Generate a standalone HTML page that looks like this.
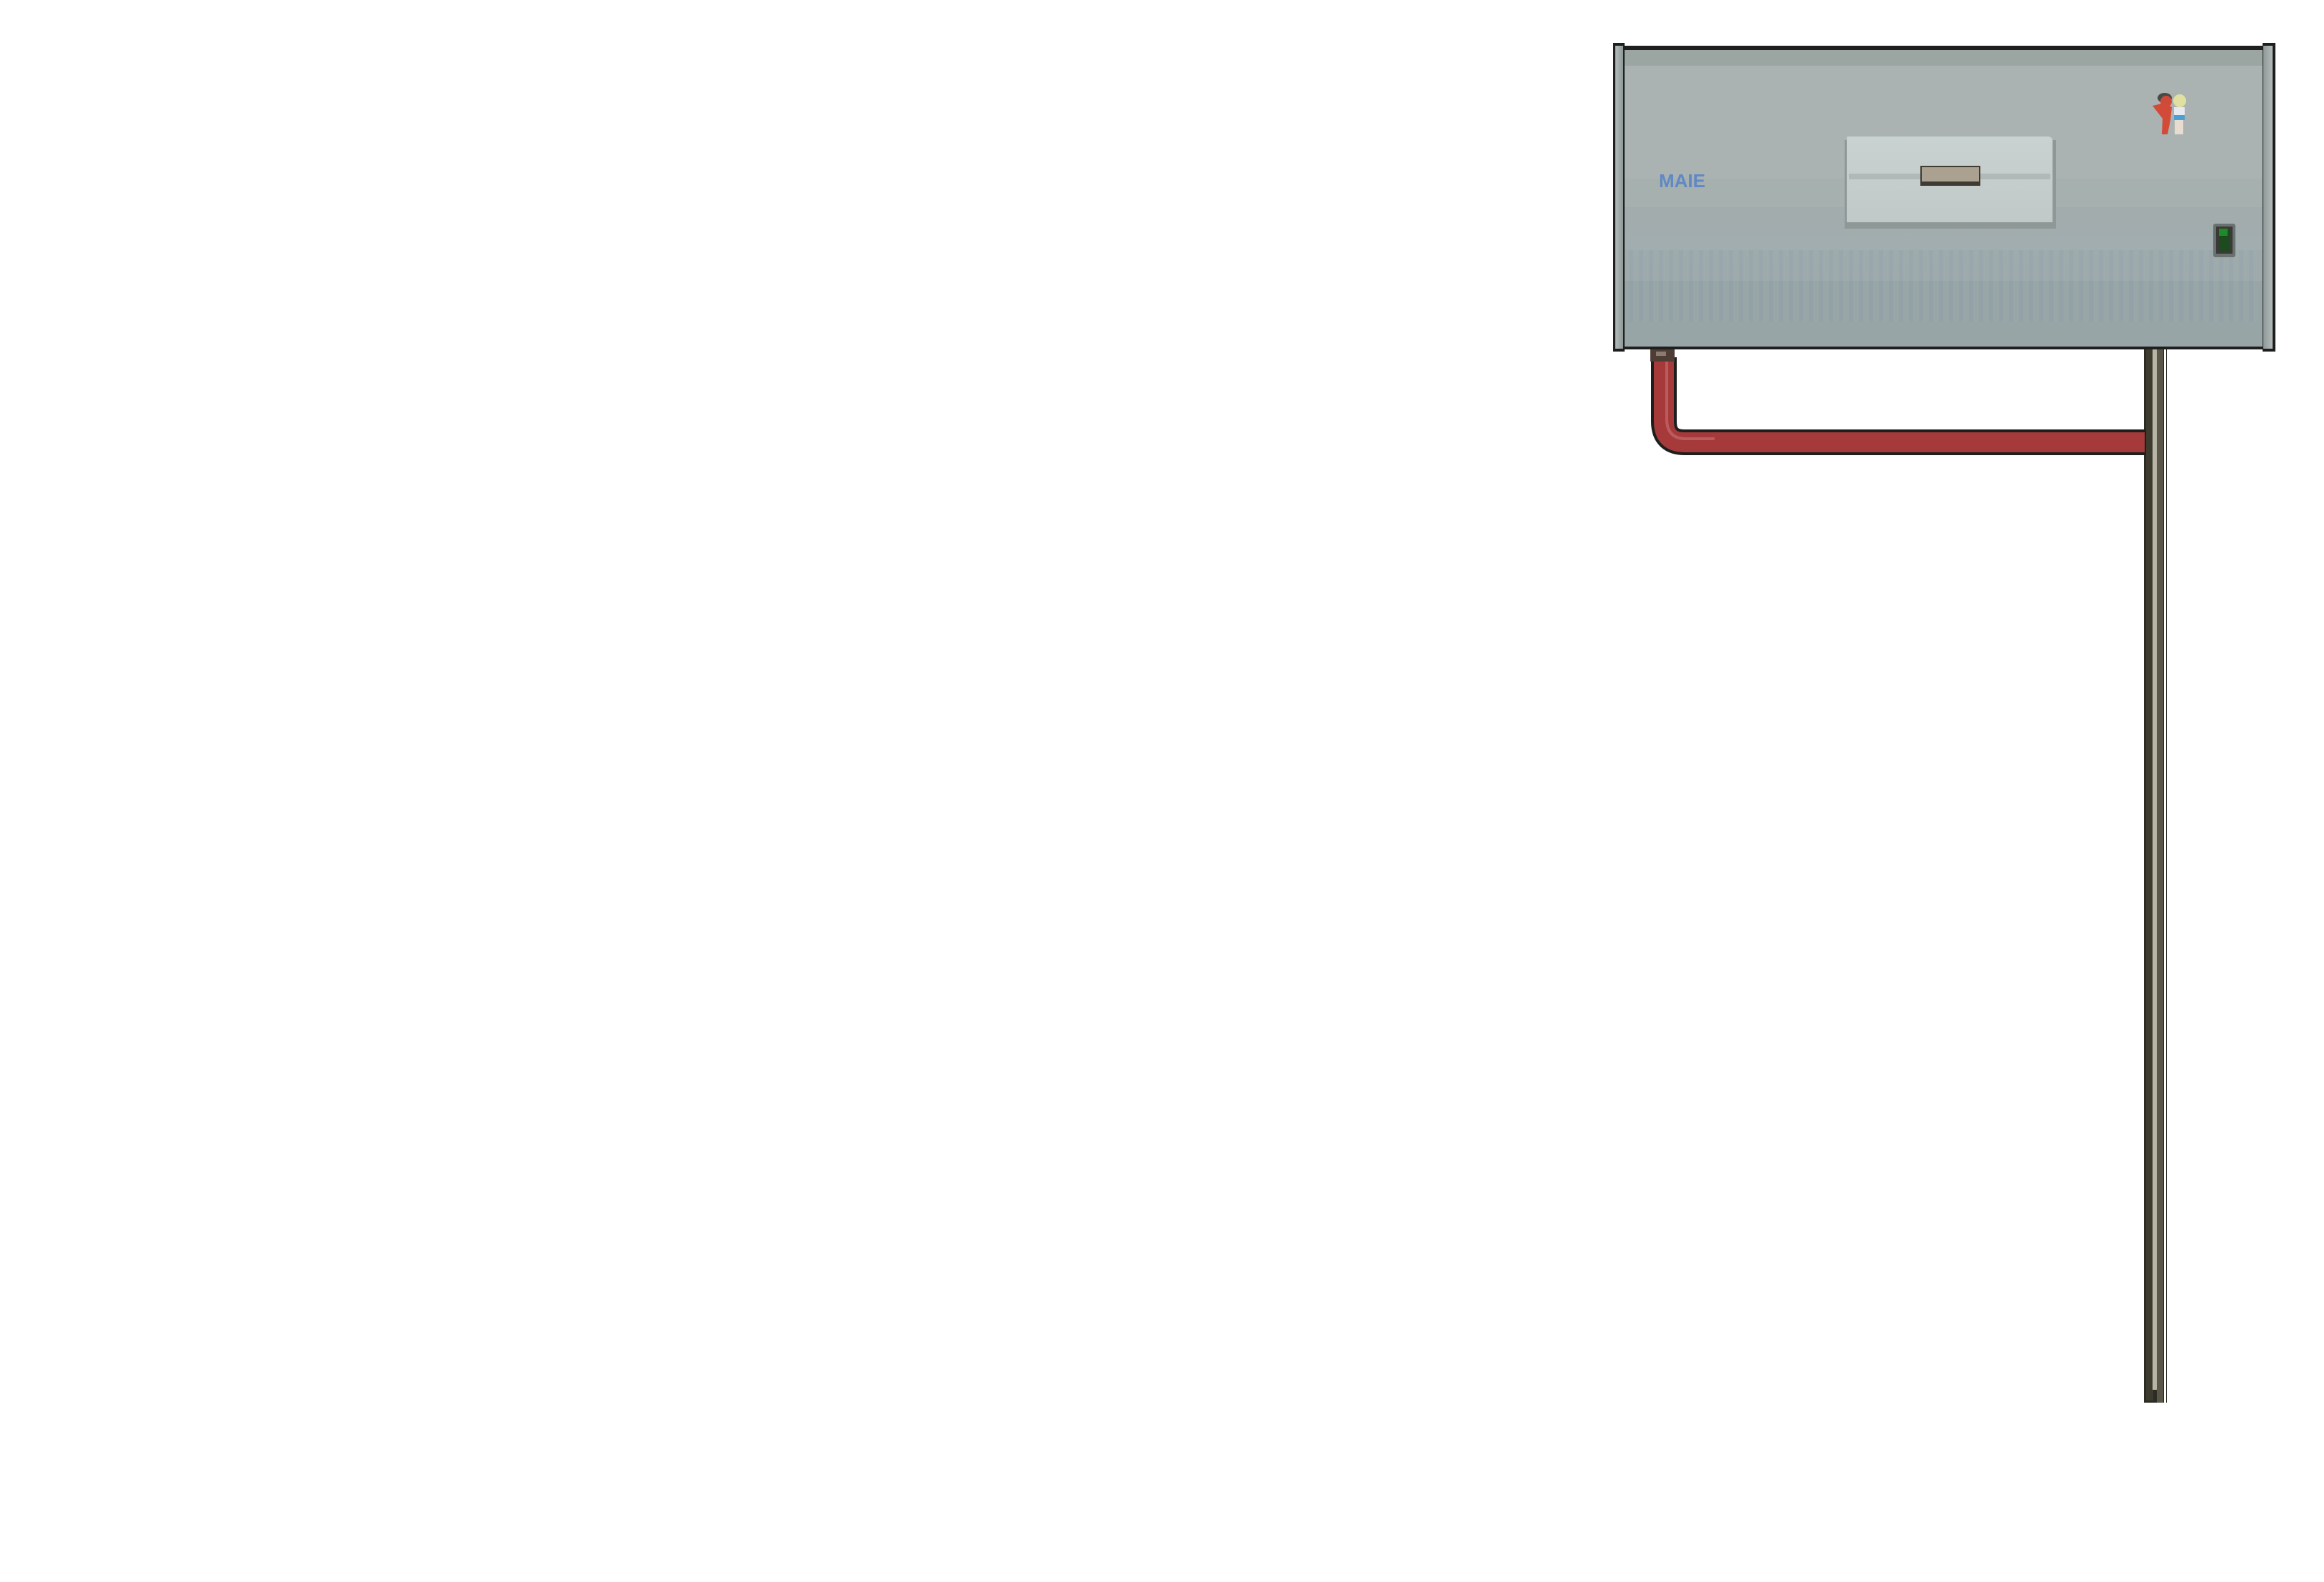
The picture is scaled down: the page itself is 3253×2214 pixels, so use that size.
<!DOCTYPE html>
<html><head><meta charset="utf-8"><style>
html,body{margin:0;padding:0;background:#fff;}
body{width:3253px;height:2214px;position:relative;overflow:hidden;font-family:"Liberation Sans",sans-serif;}
.a{position:absolute;}
</style></head><body>
<!-- pole -->
<div class="a" style="left:3001px;top:485px;width:32px;height:1478px;background:#2c2c24;"></div>
<div class="a" style="left:3004px;top:485px;width:10px;height:1475px;background:#3c3b2d;"></div>
<div class="a" style="left:3013px;top:485px;width:6px;height:1460px;background:#b8b5a6;"></div>
<div class="a" style="left:3019px;top:485px;width:9px;height:1478px;background:#5a5748;"></div>
<div class="a" style="left:3029px;top:485px;width:3px;height:1478px;background:#fff;"></div>
<!-- red pipe -->
<svg class="a" style="left:0;top:0" width="3253" height="700">
<path d="M2329 500 L2329 590 Q2329 619 2358 619 L3004 619" fill="none" stroke="#1e1e1e" stroke-width="36"/>
<path d="M2329 500 L2329 590 Q2329 619 2358 619 L3002 619" fill="none" stroke="#a63a3b" stroke-width="28"/>
<path d="M2333 505 L2333 588 Q2334 614 2360 614 L2400 614" fill="none" stroke="#c46a6c" stroke-width="4" opacity=".7"/>
<rect x="2310" y="484" width="34" height="22" fill="#4e3d35"/>
<rect x="2318" y="492" width="14" height="6" fill="#8a7a70"/>
</svg>
<!-- box body -->
<div class="a" style="left:2265px;top:64px;width:910px;height:425px;background:#1f1f1f;"></div>
<div class="a" style="left:2268px;top:70px;width:904px;height:415px;background:linear-gradient(#9ba6a3 0,#9ba6a3 22px,#aab3b1 22px,#aab3b1 180px,#a6b0ae 180px,#a6b0ae 220px,#a2acad 220px,#a1adae 280px,#9eabad 280px,#9eaaac 323px,#97a5a7 323px,#97a5a7 415px);"></div>
<div class="a" style="left:2280px;top:350px;width:880px;height:100px;background:repeating-linear-gradient(90deg,rgba(120,140,170,.12) 0 6px,rgba(160,175,170,.08) 6px 14px);"></div>
<!-- flanges -->
<div class="a" style="left:2258px;top:60px;width:16px;height:432px;background:#1e1e1e;"></div>
<div class="a" style="left:2261px;top:64px;width:11px;height:424px;background:linear-gradient(90deg,#b3bcba,#8f9997);"></div>
<div class="a" style="left:3167px;top:60px;width:18px;height:432px;background:#1e1e1e;"></div>
<div class="a" style="left:3168px;top:64px;width:13px;height:424px;background:linear-gradient(90deg,#8f9997,#b3bcba);"></div>
<!-- white panel -->
<div class="a" style="left:2582px;top:196px;width:296px;height:124px;background:#8f9896;"></div>
<div class="a" style="left:2585px;top:191px;width:288px;height:120px;background:linear-gradient(#c9d2d1,#c0c9c8);border-radius:2px 6px 0 0;"></div>
<div class="a" style="left:2588px;top:243px;width:282px;height:8px;background:#b0b9b8;"></div>
<div class="a" style="left:2688px;top:232px;width:84px;height:28px;background:#3f3a32;"></div>
<div class="a" style="left:2690px;top:234px;width:80px;height:20px;background:#aaa191;"></div>
<!-- logo -->
<div class="a" style="left:2322px;top:238px;font-size:26px;font-weight:bold;color:#6088c4;letter-spacing:0;line-height:30px;">MAIE</div>
<!-- characters -->
<svg class="a" style="left:3010px;top:128px" width="72" height="62">
<ellipse cx="20" cy="9" rx="10" ry="7" fill="#4a4a45"/>
<circle cx="22" cy="14" r="8" fill="#d04a3a"/>
<path d="M3 20 L20 16 L30 22 L28 40 L24 60 L16 60 L17 38 Z" fill="#d24a38"/>
<circle cx="41" cy="13" r="9" fill="#e0e0a0"/>
<rect x="33" y="22" width="15" height="14" fill="#e8e8f0"/>
<rect x="33" y="33" width="15" height="7" fill="#4aa0d0"/>
<rect x="34" y="40" width="12" height="20" fill="#e8dcd0"/>
</svg>
<!-- switch -->
<div class="a" style="left:3098px;top:313px;width:31px;height:47px;background:#6a7270;border-radius:3px;"></div>
<div class="a" style="left:3102px;top:317px;width:23px;height:38px;background:#3a3a38;"></div>
<div class="a" style="left:3106px;top:320px;width:15px;height:32px;background:#1e4a20;"></div>
<div class="a" style="left:3106px;top:320px;width:12px;height:10px;background:#1f8a28;"></div>
</body></html>
